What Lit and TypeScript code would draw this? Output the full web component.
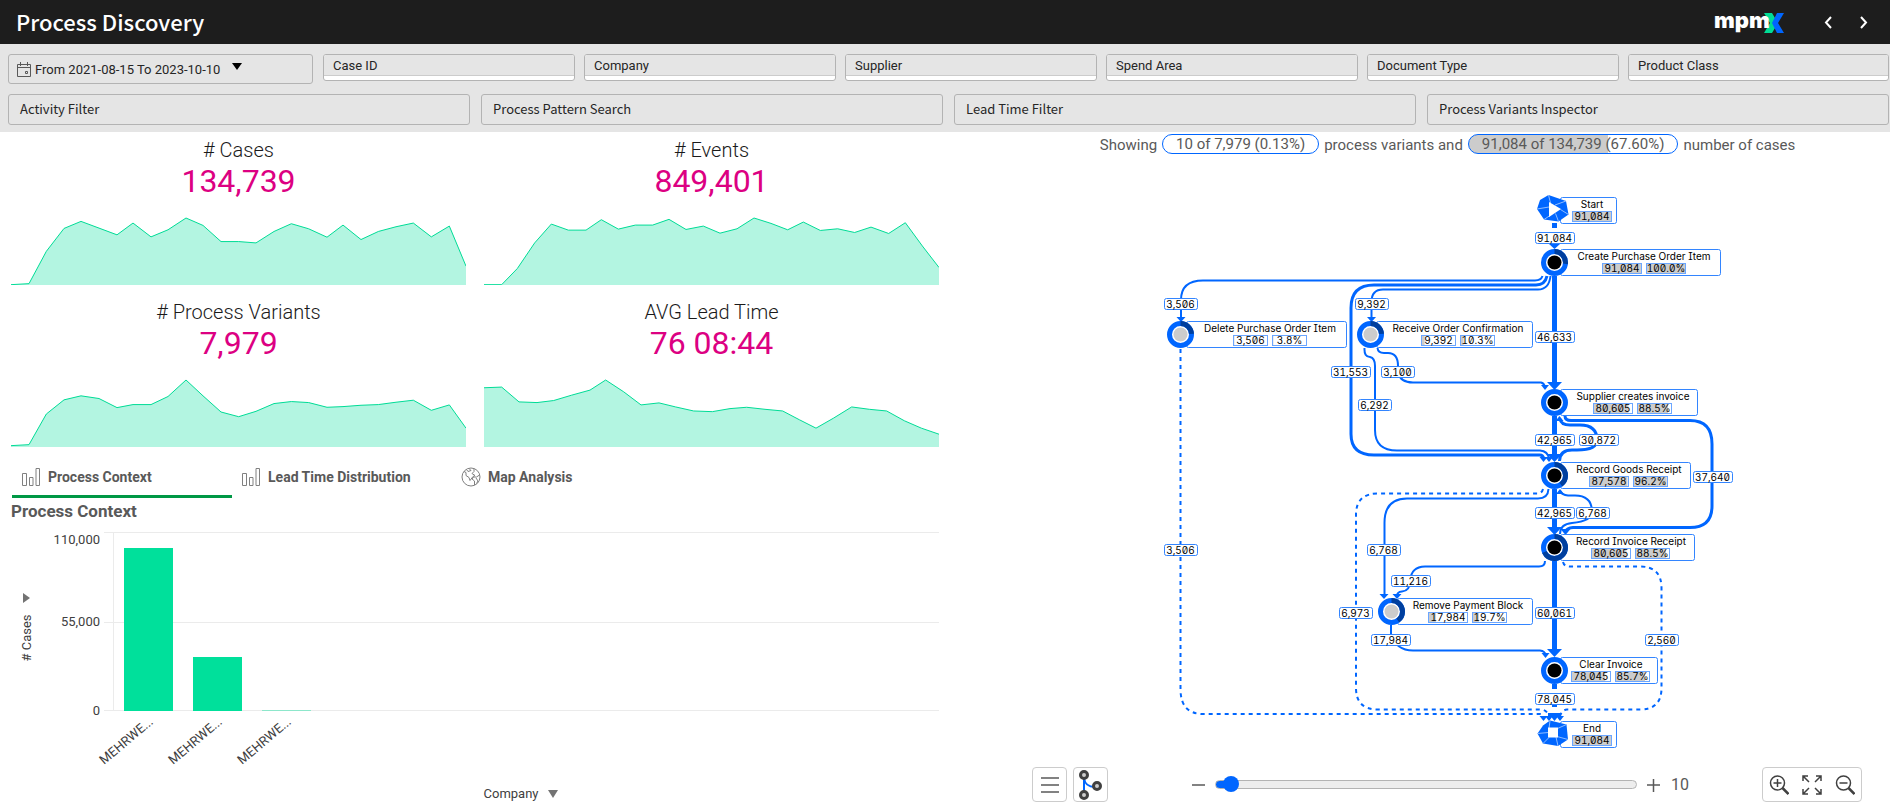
import { LitElement, html, svg, css } from "lit";
import { customElement, property, state } from "lit/decorators.js";
import { classMap } from "lit/directives/class-map.js";

interface Kpi {
  title: string;
  value: string;
  box: string;
  base: number;
  xs: number[];
  ys: number[];
}

const MONTHS = [33, 87, 139, 192, 243, 297, 351, 399, 453, 504, 558, 609, 663, 716, 768, 822, 874, 926, 981, 1029, 1083, 1135, 1188, 1240, 1294, 1348, 1398];

const KPIS: Kpi[] = [
  {
    title: "# Cases", value: "134,739", box: "33 262 1365 202", base: 464, xs: MONTHS,
    ys: [463, 460, 364, 296, 275, 295, 315, 280, 321, 300, 265, 287, 335, 335, 339, 305, 282, 297, 322, 286, 329, 305, 291, 280, 321, 289, 408],
  },
  {
    title: "# Events", value: "849,401", box: "42 262 1365 202", base: 464,
    xs: [42, 95, 142, 194, 244, 295, 348, 394, 445, 496, 548, 597, 648, 700, 750, 801, 852, 903, 953, 1000, 1051, 1103, 1154, 1203, 1256, 1306, 1357, 1407],
    ys: [463, 463, 415, 339, 283, 301, 301, 270, 298, 286, 286, 269, 299, 289, 310, 297, 265, 281, 300, 277, 302, 297, 308, 292, 311, 279, 348, 412],
  },
  {
    title: "# Process Variants", value: "7,979", box: "33 745 1365 202", base: 947, xs: MONTHS,
    ys: [943, 940, 849, 807, 795, 803, 830, 821, 821, 797, 748, 795, 843, 857, 841, 818, 812, 815, 829, 827, 823, 821, 814, 808, 838, 822, 891],
  },
  {
    title: "AVG Lead Time", value: "76 08:44", box: "42 745 1365 202", base: 947,
    xs: [42, 95, 147, 201, 251, 305, 360, 407, 461, 513, 567, 617, 671, 727, 780, 830, 885, 938, 988, 1038, 1091, 1145, 1198, 1250, 1303, 1354, 1407],
    ys: [771, 769, 813, 815, 809, 793, 778, 748, 783, 822, 816, 828, 840, 842, 833, 829, 835, 840, 866, 891, 861, 828, 835, 840, 869, 891, 909],
  },
];

@customElement("kpi-card")
class KpiCard extends LitElement {
  @property({ attribute: false }) kpi!: Kpi;

  static styles = css`
    :host { display: block; text-align: center; }
    .title { margin: 0; font-size: 20px; line-height: 24px; font-weight: 300; color: #1a1a1a; }
    .value { margin: 0 0 17px; font-size: 32px; line-height: 38px; color: #dc0082; }
    .spark { display: block; width: 100%; height: 68px; }
    .area { fill: #b3f5e1; }
    .line { fill: none; stroke: #00dc96; stroke-width: 1; vector-effect: non-scaling-stroke; }
  `;

  render() {
    const { xs, ys, box, base, title, value } = this.kpi;
    const line = xs.map((x, i) => `${x},${ys[i]}`).join(" ");
    return html`
      <h2 class="title">${title}</h2>
      <p class="value">${value}</p>
      <svg class="spark" viewBox=${box} preserveAspectRatio="none" aria-hidden="true">
        <polygon class="area" points="${xs[0]},${base} ${line} ${xs[xs.length - 1]},${base}"></polygon>
        <polyline class="line" points=${line}></polyline>
      </svg>
    `;
  }
}

@customElement("company-chart")
class CompanyChart extends LitElement {
  static styles = css`
    :host { display: block; }
    .plot { display: block; width: 100%; height: 260px; font-size: 13px; }
    .grid { stroke: #ebebeb; stroke-width: 1; shape-rendering: crispEdges; }
    .bar { fill: #00e09b; shape-rendering: crispEdges; }
    .text { fill: #404040; }
    .marker { fill: #737373; }
    .foot { display: flex; justify-content: center; padding-left: 92px; }
    .dim { display: flex; align-items: center; gap: 10px; border: 0; padding: 0; background: none; font: 13px/18px Roboto, sans-serif; color: #404040; }
  `;

  render() {
    const ticks: [string, number, number][] = [["110,000", 7, 19], ["55,000", 97, 101], ["0", 185, 190]];
    const bars: [number, number][] = [[113, 163], [182, 54], [251, 1]];
    return html`
      <svg class="plot" role="img" aria-label="Number of cases by company">
        ${ticks.map(([label, y, base]) => svg`
          <line class="grid" x1="93" x2="100%" y1=${y + 0.5} y2=${y + 0.5}></line>
          <text class="text" x="89" y=${base} text-anchor="end">${label}</text>`)}
        <line class="grid" x1="102.5" x2="102.5" y1="7" y2="186"></line>
        ${bars.map(([x, h]) => svg`
          <rect class="bar" x=${x} y=${186 - h} width="49" height=${h} opacity=${h > 1 ? 1 : 0.4}></rect>
          <text class="text" text-anchor="end" transform="translate(${x + 30} 198) rotate(-40)">MEHRWE...</text>`)}
        <text class="text" text-anchor="middle" transform="translate(20 113) rotate(-90)">#&nbsp;Cases</text>
        <path class="marker" d="M12 68l7 5-7 5z"></path>
      </svg>
      <div class="foot">
        <button class="dim" type="button">Company
          <svg width="10" height="8" aria-hidden="true"><path class="marker" d="M0 0h10L5 8z"></path></svg>
        </button>
      </div>
    `;
  }
}

interface FlowNode {
  name: string;
  x: number;
  y: number;
  right: number;
  mid: number;
  count: string;
  share?: number;
  core: "dark" | "light" | "play" | "stop";
  arc?: number;
}

const NODES: FlowNode[] = [
  { name: "Start", x: 1554, y: 210, right: 1617, mid: 1592, count: "91,084", core: "play" },
  { name: "Create Purchase Order Item", x: 1554, y: 262, right: 1721, mid: 1644, count: "91,084", share: 100, core: "dark", arc: 0.27 },
  { name: "Delete Purchase Order Item", x: 1180, y: 334, right: 1347, mid: 1270, count: "3,506", share: 3.8, core: "light", arc: 0.24 },
  { name: "Receive Order Confirmation", x: 1370, y: 334, right: 1533, mid: 1458, count: "9,392", share: 10.3, core: "light", arc: 0.24 },
  { name: "Supplier creates invoice", x: 1554, y: 402, right: 1698, mid: 1633, count: "80,605", share: 88.5, core: "dark" },
  { name: "Record Goods Receipt", x: 1554, y: 475, right: 1691, mid: 1629, count: "87,578", share: 96.2, core: "dark", arc: 0.4 },
  { name: "Record Invoice Receipt", x: 1554, y: 547, right: 1695, mid: 1631, count: "80,605", share: 88.5, core: "dark", arc: 0.68 },
  { name: "Remove Payment Block", x: 1391, y: 611, right: 1533, mid: 1468, count: "17,984", share: 19.7, core: "light", arc: 0.4 },
  { name: "Clear Invoice", x: 1554, y: 670, right: 1658, mid: 1611, count: "78,045", share: 85.7, core: "dark" },
  { name: "End", x: 1554, y: 734, right: 1617, mid: 1592, count: "91,084", core: "stop" },
];

const THICK = [
  "M1554.500 276V384", "M1554.500 416V456", "M1554.500 489V530", "M1554.500 561V652",
  "M1554.500 223V228", "M1554.500 684V689", "M1554.500 704V707",
];
const MEDIUM = [
  "M1547 276Q1545 285 1536 285H1374Q1351 285 1351 308V434Q1351 455 1374 455H1540Q1543 455 1544 459",
  "M1559.500 461Q1560 450 1572 450H1577Q1597 450 1597 440Q1597 425 1580 425H1570Q1561 425 1560 419",
  "M1565 416Q1565 420.500 1571 420.500H1690Q1712 420.500 1712 444V506Q1712 527.500 1690 527.500H1573Q1567 528 1566 531",
];
const THIN = [
  "M1542.500 276Q1541 280.500 1535 280.500H1203Q1181 280.500 1181 300V318",
  "M1550.500 276Q1549 289.500 1538 289.500H1383Q1371.500 289.500 1371.500 302V318",
  "M1364.500 348Q1364 357 1370 357Q1375 358 1375 366V430Q1375 450.500 1397 450.500H1540Q1548 451 1549 459",
  "M1377.500 348Q1378 353 1384 353H1388Q1398 353 1398 366V372Q1400 382.500 1413 382.500H1541Q1544 383 1545 387",
  "M1560 534Q1560 524 1572 523Q1592 521 1592 512Q1592 495.500 1575 495.500H1568Q1562 495 1560 491",
  "M1548.500 489Q1548 498.500 1538 498.500H1407Q1384.500 498.500 1384.500 523V595",
  "M1545 561Q1545 566.500 1539 566.500H1425Q1411 567 1410.500 580Q1410 591 1402 591.500Q1397 592 1397 596",
  "M1391 625V634Q1396 650.500 1413 650.500H1540Q1545 651 1545.500 655",
];
const DASHED = [
  "M1543 489Q1542 493.500 1537 493.500H1378Q1356 493.500 1356 515V688Q1356 709.500 1378 709.500H1541Q1547 710 1549 716",
  "M1563 562Q1564 566.500 1570 566.500H1640Q1661.500 566.500 1661.500 588V688Q1661.500 709.500 1640 709.500H1567Q1562 710 1560 716",
  "M1180.500 349V690Q1181 714 1203 714H1540Q1543 714 1544 717",
];
const ARROWS = [
  "M1547 382h15l-7.500 8z", "M1547 454h15l-7.500 8z", "M1547 527h15l-7.500 8z", "M1547 649h15l-7.500 8z",
  "M1549 244h11l-5.500 5z", "M1548 713h13v4h-13z",
  "M1176.500 317h9l-4.500 5z", "M1367 317h9l-4.500 5z", "M1541 385h8l-4 5z", "M1539.500 457h8l-4 5z", "M1545 457h8l-4 5z",
  "M1555.500 421h8l-4-5z", "M1560.500 529h10l-5 6z", "M1556 494h8l-4-5z", "M1379.500 594h9l-4.500 5z", "M1392.500 594h9l-4.500 5z",
  "M1541.500 653h8l-4 5z", "M1539.500 716h8l-4 5z", "M1545 716h8l-4 5z", "M1550.500 716h8l-4 5z", "M1556 716h8l-4 5z",
];
const LABELS: [string, number, number][] = [
  ["91,084", 1554, 238], ["3,506", 1180, 304], ["9,392", 1371, 304], ["46,633", 1554, 337], ["31,553", 1350, 372],
  ["3,100", 1397, 372], ["6,292", 1374, 405], ["42,965", 1554, 440], ["30,872", 1598, 440], ["37,640", 1712, 477],
  ["42,965", 1554, 513], ["6,768", 1592, 513], ["3,506", 1180, 550], ["6,768", 1383, 550], ["11,216", 1410, 581],
  ["6,973", 1355, 613], ["60,061", 1554, 613], ["17,984", 1390, 640], ["2,560", 1661, 640], ["78,045", 1554, 699],
];

@customElement("process-graph")
class ProcessGraph extends LitElement {
  static styles = css`
    :host { display: block; }
    .graph { display: block; width: 100%; height: 608px; font-family: Inter, sans-serif; font-feature-settings: "zero", "cv08", "tnum"; font-size: 10px; }
    .edge { fill: none; stroke: #0066ff; stroke-width: 2; }
    .thick { stroke-width: 5; }
    .medium { stroke-width: 3; }
    .dashed { stroke-width: 2; stroke-dasharray: 4 4; }
    .solid { fill: #0066ff; }
    .frame { fill: #fff; stroke: #3385ff; stroke-width: 1; }
    .fill { fill: #ccc; }
    .outline { fill: none; stroke: #6ba6ff; stroke-width: 1; }
    .text { fill: #000; text-anchor: middle; }
    .ring { fill: #fff; stroke: #0066ff; stroke-width: 5; }
    .arc { fill: none; stroke: #003f9e; stroke-width: 5; }
    .dark { fill: #000; }
    .light { fill: #ccc; }
    .facet { fill: none; stroke: #8fbcff; stroke-width: 1; }
    .white { fill: #fff; }
  `;

  private chip(x: number, y: number, width: number, text: string, share: number) {
    return svg`
      <rect class="fill" x=${x} y=${y} width=${(width * share) / 100} height="10"></rect>
      <rect class="outline" x=${x + 0.5} y=${y + 0.5} width=${width - 1} height="10"></rect>
      <text class="text" x=${x + width / 2} y=${y + 9}>${text}</text>`;
  }

  private symbol(n: FlowNode) {
    if (n.core === "play") {
      return svg`
        <path class="solid" d="M1548.500 195l17.500 6 2.500 13.500-10 7-14.500-2-7-10.500 3-9z"></path>
        <path class="facet" d="M1548.500 195l2 8M1566 201l-11 4M1568.500 214.500l-8-5M1558.500 221.500l-3-8M1544 219.500l6-4M1537 209l12-2"></path>
        <path class="white" d="M1549 202v15l12-8z"></path>`;
    }
    if (n.core === "stop") {
      return svg`
        <path class="solid" d="M1550 720.500l16.500 4 1.500 15-10 6.500-15-2.500-5.500-10 5.500-8z"></path>
        <path class="facet" d="M1550 720.500l-1 8M1566.500 724.500l-9 4M1568 739.500l-11-3M1558 746l-2-9M1543 743.500l6-6M1537.500 733.500l11-1"></path>
        <path class="white" d="M1548 727.500h10v10h-10z"></path>`;
    }
    const around = 2 * Math.PI * 11;
    return svg`
      <circle class="ring" cx=${n.x + 0.5} cy=${n.y + 0.5} r="11"></circle>
      ${n.arc ? svg`<circle class="arc" cx=${n.x + 0.5} cy=${n.y + 0.5} r="11" stroke-dasharray="${around * n.arc} ${around}" transform="rotate(-90 ${n.x + 0.5} ${n.y + 0.5})"></circle>` : ""}
      <circle class=${n.core} cx=${n.x + 0.5} cy=${n.y + 0.5} r="7"></circle>`;
  }

  private node(n: FlowNode) {
    const w = n.count.length > 5 ? 40 : 35;
    const total = n.share === undefined ? w : w + 4 + (n.share === 100 ? 40 : 35);
    const left = n.mid - Math.round(total / 2);
    return svg`
      <rect class="frame" x=${n.x + 6.5} y=${n.y - 12.5} width=${n.right - n.x - 7} height="26" rx="2"></rect>
      <text class="text" x=${n.mid} y=${n.y - 2}>${n.name}</text>
      ${this.chip(left, n.y + 1, w, n.count, n.share ?? 100)}
      ${n.share === undefined ? "" : this.chip(left + w + 4, n.y + 1, total - w - 4, `${n.share.toFixed(1)}%`, n.share)}
      ${this.symbol(n)}`;
  }

  render() {
    return html`
      <svg class="graph" viewBox="945 155 945 608" preserveAspectRatio="xMidYMid meet" role="img" aria-label="Process graph">
        ${DASHED.map((d) => svg`<path class="edge dashed" d=${d}></path>`)}
        ${THIN.map((d) => svg`<path class="edge" d=${d}></path>`)}
        ${MEDIUM.map((d) => svg`<path class="edge medium" d=${d}></path>`)}
        ${THICK.map((d) => svg`<path class="edge thick" d=${d}></path>`)}
        ${ARROWS.map((d) => svg`<path class="solid" d=${d}></path>`)}
        ${NODES.map((n) => this.node(n))}
        ${LABELS.map(([text, x, y]) => {
          const w = text.length > 5 ? 39 : 33;
          return svg`
            <rect class="frame" x=${x - Math.floor(w / 2) + 0.5} y=${y - 5.5} width=${w} height="11" rx="2"></rect>
            <text class="text" x=${x + 0.5} y=${y + 4}>${text}</text>`;
        })}
      </svg>
    `;
  }
}

@customElement("app-root")
class AppRoot extends LitElement {
  @state() private tab = 0;
  @state() private variants = 10;

  static styles = css`
    :host { display: flex; flex-direction: column; min-height: 100vh; background: #fff; font-family: Roboto, sans-serif; color: #595959; }
    * { box-sizing: border-box; }
    button { font: inherit; color: inherit; background: none; border: 0; padding: 0; margin: 0; }

    .bar { display: flex; align-items: center; height: 44px; padding: 0 18px 0 16px; background: #1d1d1d; color: #fff; }
    .heading { flex: 1; margin: 0; padding-bottom: 2px; font: 500 22px/42px "Noto Sans CJK JP", "Noto Sans", sans-serif; }
    .logo { width: 72px; height: 40px; margin-right: 36px; }
    .logo-text { font: 900 22px Inter, sans-serif; fill: #fff; }
    .green { fill: #00dc96; }
    .blue { fill: #0066ff; }
    .chevron { display: flex; width: 16px; height: 16px; margin-left: 19px; }
    .chevron.first { margin-left: 0; }
    .stroke { fill: none; stroke: currentColor; stroke-width: 2; }

    .filters { background: #e5e5e5; padding: 10px 1px 7px 8px; height: 88px; color: #262626; }
    .row { display: flex; height: 40px; align-items: flex-start; }
    .date { display: flex; align-items: center; width: 305px; height: 30px; margin-right: 10px; padding: 0 8px; border: 1px solid #b3b3b3; border-radius: 3px; font-size: 13px; }
    .date-text { margin: 0 12px 0 4px; }
    .caret { margin-bottom: 6px; }
    .fields { flex: 1; display: grid; grid-template-columns: repeat(6, 1fr); }
    .field { display: flex; flex-direction: column; height: 27px; margin-right: 9px; border: 1px solid #b3b3b3; border-radius: 3px; background: #fff; overflow: hidden; text-align: left; font-size: 13px; line-height: 21px; }
    .field:last-child { margin-right: 0; }
    .field-name { align-self: stretch; height: 21px; padding: 0 9px; background: #e5e5e5; border-bottom: 1px solid #ccc; }
    .groups { display: grid; grid-template-columns: repeat(4, 1fr); gap: 11px; }
    .group { height: 31px; padding: 0 11px 2px; border: 1px solid #b3b3b3; border-radius: 3px; text-align: left; font: 13px/26px "Noto Sans CJK JP", "Noto Sans", sans-serif; }

    .main { flex: 1; display: grid; grid-template-columns: 1fr 1fr; }
    .left { padding: 0 6px 0 11px; }
    .kpis { display: grid; grid-template-columns: 1fr 1fr; gap: 0 18px; }
    .kpi { height: 162px; padding-top: 6px; }
    .tabs { display: flex; margin-left: 1px; }
    .tab { display: flex; align-items: center; gap: 7px; width: 220px; height: 42px; padding: 2px 9px 0; border-bottom: 3px solid transparent; font-size: 14px; font-weight: 700; }
    .tab.active { border-bottom-color: #009845; }
    .icon { width: 20px; height: 20px; fill: none; stroke: #808080; stroke-width: 1; }
    .section { margin: 0; padding: 1px 0 2px; font-size: 17px; line-height: 24px; font-weight: 700; }

    .right { display: flex; flex-direction: column; }
    .summary { display: flex; justify-content: center; align-items: center; gap: 5px; height: 23px; padding-left: 60px; font-size: 15px; line-height: 20px; }
    .summary-text { padding-top: 3px; }
    .pill { padding: 0 13px; border: 1px solid #0066ff; border-radius: 10px; line-height: 18px; }
    .pill.part { background: linear-gradient(90deg, #ccc 67%, #fff 67%); }

    .tools { display: flex; align-items: center; padding: 4px 28px 0 87px; height: 39px; }
    .tool { display: flex; align-items: center; justify-content: center; width: 35px; height: 35px; border: 1px solid #ccc; border-radius: 4px; margin-right: 6px; }
    .tool.last { margin-right: 84px; }
    .step { display: flex; width: 14px; height: 14px; }
    .slider { flex: 1; min-width: 0; margin: 0 10px 0 9px; height: 16px; appearance: none; background: none; }
    .slider::-webkit-slider-runnable-track { height: 9px; border-radius: 5px; border: 1px solid #b3b3b3; background: linear-gradient(90deg, #0066ff 15px, #ededed 15px); }
    .slider::-webkit-slider-thumb { appearance: none; width: 16px; height: 16px; margin-top: -5px; border-radius: 50%; background: #0066ff; }
    .amount { margin: 0 73px 0 10px; font-size: 16px; line-height: 20px; }
    .zooms { display: flex; align-items: center; gap: 13px; height: 35px; padding: 0 6px; border: 1px solid #ccc; border-radius: 4px; color: #404040; }
    .zoom { display: flex; width: 20px; height: 20px; }
    .node-icon { fill: #ccc; stroke: #404040; stroke-width: 3; }
    .link-icon { fill: none; stroke: #0066ff; stroke-width: 2; }
    .thin { fill: none; stroke: currentColor; stroke-width: 1.5; }
    .handle { stroke-width: 2.5; }
  `;

  private tabIcon(i: number) {
    return i < 2
      ? html`<svg class="icon" viewBox="0 0 20 20" aria-hidden="true"><path d="M1.500 6.500h4v12h-4zM8.500 10.500h3.500v8H8.500zM15 1.500h3.500v17H15z"></path></svg>`
      : html`<svg class="icon" viewBox="0 0 20 20" aria-hidden="true"><circle cx="10" cy="10" r="9"></circle><path d="M3 4.500l2 1v3l3 2 1 3 3-4 2-1-3-2 2-2V1.500M8 1.500l2 2-3 1-1.500-2M18.500 8l-3 2-3 0-1.500 2 2.500 2v4M15 11l2 3-1.500 2.500"></path></svg>`;
  }

  render() {
    const fields = ["Case ID", "Company", "Supplier", "Spend Area", "Document Type", "Product Class"];
    const groups = ["Activity Filter", "Process Pattern Search", "Lead Time Filter", "Process Variants Inspector"];
    const tabs = ["Process Context", "Lead Time Distribution", "Map Analysis"];
    return html`
      <header class="bar">
        <h1 class="heading">Process Discovery</h1>
        <svg class="logo" viewBox="0 -6 72 40" role="img" aria-label="mpmX">
          <path class="green" d="M51 5h8l6 10-6 10h-8l6-10z"></path>
          <path class="blue" d="M71 5h-7l-5 10 5 10h7l-6-10z"></path>
          <text class="logo-text" x="1" y="20">mpm</text>
        </svg>
        <button class="chevron first" type="button" aria-label="Previous sheet"><svg width="16" height="16"><path class="stroke" d="M10 3L5 8.500l5 5.500"></path></svg></button>
        <button class="chevron" type="button" aria-label="Next sheet"><svg width="16" height="16"><path class="stroke" d="M5 3l5 5.500L5 14"></path></svg></button>
      </header>

      <section class="filters" aria-label="Filters">
        <div class="row">
          <button class="date" type="button">
            <svg width="14" height="15" viewBox="0 0 14 15" aria-hidden="true" fill="none" stroke="#595959"><path d="M.500 2.500h13v12H.500zM.500 5.500h13M3.500 0v4M10.500 0v4M8.500 9.500h2v2h-2z"></path></svg>
            <span class="date-text">From 2021-08-15 To 2023-10-10</span>
            <svg class="caret" width="10" height="7" aria-hidden="true"><path d="M0 0h10L5 7z"></path></svg>
          </button>
          <div class="fields">
            ${fields.map((f) => html`<button class="field" type="button"><span class="field-name">${f}</span></button>`)}
          </div>
        </div>
        <div class="groups">${groups.map((g) => html`<button class="group" type="button">${g}</button>`)}</div>
      </section>

      <main class="main">
        <div class="left">
          <div class="kpis">${KPIS.map((k) => html`<kpi-card class="kpi" .kpi=${k}></kpi-card>`)}</div>
          <div class="tabs" role="tablist">
            ${tabs.map((t, i) => html`
              <button class=${classMap({ tab: true, active: this.tab === i })} type="button" role="tab" aria-selected=${this.tab === i} @click=${() => (this.tab = i)}>
                ${this.tabIcon(i)}<span>${t}</span>
              </button>`)}
          </div>
          <h2 class="section">${tabs[this.tab]}</h2>
          <company-chart></company-chart>
        </div>

        <div class="right">
          <div class="summary">
            <span class="summary-text">Showing</span>
            <span class="pill">10 of 7,979 (0.13%)</span>
            <span class="summary-text">process variants and</span>
            <span class="pill part">91,084 of 134,739 (67.60%)</span>
            <span class="summary-text">number of cases</span>
          </div>
          <process-graph></process-graph>
          <div class="tools">
            <button class="tool" type="button" aria-label="Menu"><svg width="20" height="18"><path class="thin" d="M1 2h18M1 9h18M1 16h18"></path></svg></button>
            <button class="tool last" type="button" aria-label="Graph view">
              <svg width="26" height="30" viewBox="0 0 26 30">
                <path class="link-icon" d="M6 6v18M6 8q1 9 11 9"></path>
                <circle class="node-icon" cx="6" cy="5" r="3.500"></circle><circle class="node-icon" cx="6" cy="25" r="3.500"></circle><circle class="node-icon" cx="19" cy="16" r="3.500"></circle>
              </svg>
            </button>
            <button class="step" type="button" aria-label="Fewer variants" @click=${() => (this.variants = Math.max(1, this.variants - 1))}><svg width="14" height="14"><path class="thin" d="M0 7h13"></path></svg></button>
            <input class="slider" type="range" min="1" max="500" aria-label="Number of variants" .value=${String(this.variants)} @input=${(e: Event) => (this.variants = Number((e.target as HTMLInputElement).value))}>
            <button class="step" type="button" aria-label="More variants" @click=${() => (this.variants += 1)}><svg width="14" height="14"><path class="thin" d="M0 7h13M6.500 1v13"></path></svg></button>
            <span class="amount">${this.variants}</span>
            <div class="zooms">
              <button class="zoom" type="button" aria-label="Zoom in"><svg width="20" height="20"><g class="thin"><circle cx="8.500" cy="8" r="7"></circle><path d="M4.500 8h8M8.500 4v8"></path><path class="handle" d="M13.500 13l6 6"></path></g></svg></button>
              <button class="zoom" type="button" aria-label="Fit to screen"><svg width="20" height="20"><path class="thin" d="M1 6V1h5M1 1l6 6M14 1h5v5M19 1l-6 6M1 14v5h5M1 19l6-6M19 14v5h-5M19 19l-6-6"></path></svg></button>
              <button class="zoom" type="button" aria-label="Zoom out"><svg width="20" height="20"><g class="thin"><circle cx="8.500" cy="8" r="7"></circle><path d="M4.500 8h8"></path><path class="handle" d="M13.500 13l6 6"></path></g></svg></button>
            </div>
          </div>
        </div>
      </main>
    `;
  }
}
